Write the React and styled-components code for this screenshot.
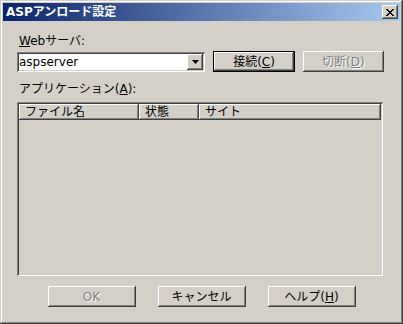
import styled, { createGlobalStyle } from 'styled-components';

const GlobalStyle = createGlobalStyle`
  html, body {
    margin: 0;
    padding: 0;
    background: #d4d0c8;
  }
  * {
    box-sizing: border-box;
  }
`;

const font = `"DejaVu Sans", "Noto Sans CJK JP", sans-serif`;

const raised = `
  box-shadow: inset -1px -1px #404040, inset 1px 1px #ffffff,
    inset -2px -2px #808080, inset 2px 2px #d4d0c8;
`;

const sunken = `
  box-shadow: inset 1px 1px #808080, inset -1px -1px #ffffff,
    inset 2px 2px #404040, inset -2px -2px #d4d0c8;
`;

const App = () => {
  return (
    <>
      <GlobalStyle />
      <Window>
        <TitleBar>
          <Title>ASPアンロード設定</Title>
          <CloseButton aria-label='close'>
            <svg width='8' height='7' viewBox='0 0 8 7'>
              <path d='M0 0h2v1h1v1h2V1h1V0h2v1H7v1H6v1H5v1h1v1h1v1h1v1H6V6H5V5H3v1H2v1H0V6h1V5h1V4h1V3H2V2H1V1H0z' fill='#000' />
            </svg>
          </CloseButton>
        </TitleBar>

        <Body>
          <Label>
            <Accel>W</Accel>ebサーバ:
          </Label>
          <ServerRow>
            <Combo>
              <ComboText>aspserver</ComboText>
              <ComboArrow>
                <svg width='7' height='4' viewBox='0 0 7 4'>
                  <path d='M0 0h7L3.5 4z' fill='#000' />
                </svg>
              </ComboArrow>
            </Combo>
            <Button $default>
              接続(<Accel>C</Accel>)
            </Button>
            <Button disabled>
              切断(<Accel>D</Accel>)
            </Button>
          </ServerRow>

          <AppLabel>
            アプリケーション(<Accel>A</Accel>):
          </AppLabel>
          <ListView>
            <ListHeader>
              <HeaderCell $width={120}>ファイル名</HeaderCell>
              <HeaderCell $width={60}>状態</HeaderCell>
              <HeaderCell $grow>サイト</HeaderCell>
            </ListHeader>
          </ListView>

          <Footer>
            <Button $wide disabled>OK</Button>
            <Button $wide>キャンセル</Button>
            <Button $wide>
              ヘルプ(<Accel>H</Accel>)
            </Button>
          </Footer>
        </Body>
      </Window>
    </>
  );
};

const Window = styled.div`
  width: 403px;
  height: 324px;
  padding: 3px;
  display: flex;
  flex-direction: column;
  background: #d4d0c8;
  font-family: ${font};
  font-size: 12px;
  color: #000;
  box-shadow: inset -1px -1px #404040, inset 1px 1px #d4d0c8,
    inset -2px -2px #808080, inset 2px 2px #ffffff;
`;

const TitleBar = styled.div`
  height: 18px;
  display: flex;
  align-items: center;
  justify-content: space-between;
  padding: 0 2px 0 3px;
  background: linear-gradient(to right, #0a246a, #a6caf0);
`;

const Title = styled.span`
  color: #fff;
  font-weight: bold;
  font-size: 12px;
  line-height: 14px;
`;

const CloseButton = styled.button`
  width: 16px;
  height: 14px;
  padding: 0;
  border: none;
  background: #d4d0c8;
  display: flex;
  align-items: center;
  justify-content: center;
  ${raised}
`;

const Body = styled.div`
  flex: 1;
  display: flex;
  flex-direction: column;
  padding: 13px 16px 0 14px;
`;

const Label = styled.div`
  line-height: 14px;
  padding-left: 2px;
`;

const Accel = styled.span`
  text-decoration: underline;
`;

const ServerRow = styled.div`
  display: flex;
  align-items: center;
  gap: 8px;
  margin-top: 3px;
`;

const Combo = styled.div`
  width: 190px;
  height: 20px;
  padding: 2px;
  display: flex;
  align-items: center;
  justify-content: space-between;
  background: #fff;
  margin-right: 0;
  ${sunken}
`;

const ComboText = styled.span`
  line-height: 14px;
`;

const ComboArrow = styled.div`
  width: 16px;
  height: 16px;
  display: flex;
  align-items: center;
  justify-content: center;
  background: #d4d0c8;
  ${raised}
`;

const Button = styled.button`
  width: ${(p) => (p.$wide ? 88 : 82)}px;
  height: 21px;
  padding: 0;
  border: none;
  background: #d4d0c8;
  font-family: ${font};
  font-size: 12px;
  line-height: 14px;
  color: ${(p) => (p.disabled ? '#808080' : '#000')};
  text-shadow: ${(p) => (p.disabled ? '1px 1px #fff' : 'none')};
  ${(p) =>
    p.$default
      ? `box-shadow: inset 0 0 0 1px #000, inset -2px -2px #404040, inset 2px 2px #ffffff,
    inset -3px -3px #808080, inset 3px 3px #d4d0c8;`
      : raised}
`;

const AppLabel = styled(Label)`
  margin-top: 10px;
`;

const ListView = styled.div`
  margin-top: 6px;
  height: 174px;
  width: 366px;
  padding: 2px;
  background: #d4d0c8;
  ${sunken}
`;

const ListHeader = styled.div`
  display: flex;
  height: 16px;
`;

const HeaderCell = styled.div`
  ${(p) => (p.$grow ? 'flex: 1;' : `width: ${p.$width}px;`)}
  height: 16px;
  padding-left: 6px;
  line-height: 16px;
  background: #d4d0c8;
  ${raised}
`;

const Footer = styled.div`
  display: flex;
  justify-content: center;
  gap: 22px;
  margin-top: 10px;
  padding-left: 2px;
`;

export default App;
